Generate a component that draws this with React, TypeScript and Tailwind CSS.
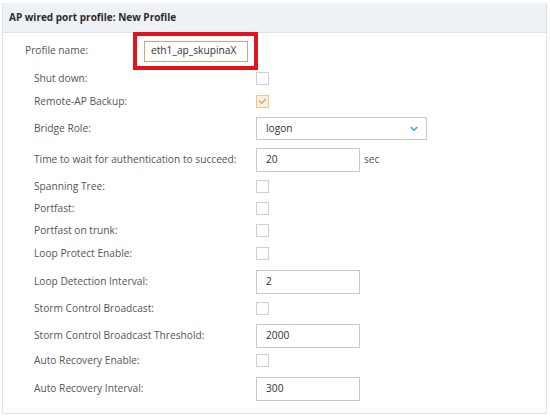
import React from "react";

const FONT = { fontFamily: '"Open Sans", "Liberation Sans", sans-serif' };

const Checkbox = ({ checked = false }: { checked?: boolean }) =>
  checked ? (
    <span className="flex h-[13px] w-[13px] items-center justify-center border border-[#f2c48c] bg-[#fdf1e2]">
      <svg className="h-[9px] w-[9px]" viewBox="0 0 10 10" fill="none">
        <path d="M1.5 4.5 L4.2 7 L8.5 2.5" stroke="#e3a256" strokeWidth={1.4} strokeLinecap="round" strokeLinejoin="round" />
      </svg>
    </span>
  ) : (
    <span className="block h-[13px] w-[13px] border border-[#cfcfcf] bg-white" />
  );

const TextBox = ({ value }: { value: string }) => (
  <div className="flex h-[24px] w-[104px] items-center border border-[#c9c9c9] bg-white pl-[9px] text-[10.2px] text-[#333]">
    {value}
  </div>
);

type Row = { label: string; mt: string; control: React.ReactNode; h: string };

const rows: Row[] = [
  { label: "Shut down:", mt: "mt-[2px]", h: "h-[13px]", control: <Checkbox /> },
  { label: "Remote-AP Backup:", mt: "mt-[10px]", h: "h-[13px]", control: <Checkbox checked /> },
  {
    label: "Bridge Role:",
    mt: "mt-[9px]",
    h: "h-[23px]",
    control: (
      <div className="flex h-[23px] w-[171px] items-center justify-between border border-[#c9c9c9] bg-white pl-[9px] pr-[8px] text-[10.2px] text-[#333]">
        <span>logon</span>
        <svg className="h-[8px] w-[8px]" viewBox="0 0 10 10" fill="none">
          <path d="M1.5 3 L5 6.5 L8.5 3" stroke="#3b9fcf" strokeWidth={1.8} strokeLinecap="round" strokeLinejoin="round" />
        </svg>
      </div>
    ),
  },
  {
    label: "Time to wait for authentication to succeed:",
    mt: "mt-[8px]",
    h: "h-[24px]",
    control: (
      <div className="flex items-center gap-[4px]">
        <TextBox value="20" />
        <span className="text-[10.2px] text-[#555]">sec</span>
      </div>
    ),
  },
  { label: "Spanning Tree:", mt: "mt-[8px]", h: "h-[13px]", control: <Checkbox /> },
  { label: "Portfast:", mt: "mt-[9px]", h: "h-[13px]", control: <Checkbox /> },
  { label: "Portfast on trunk:", mt: "mt-[9px]", h: "h-[13px]", control: <Checkbox /> },
  { label: "Loop Protect Enable:", mt: "mt-[10px]", h: "h-[13px]", control: <Checkbox /> },
  { label: "Loop Detection Interval:", mt: "mt-[10px]", h: "h-[24px]", control: <TextBox value="2" /> },
  { label: "Storm Control Broadcast:", mt: "mt-[8px]", h: "h-[13px]", control: <Checkbox /> },
  { label: "Storm Control Broadcast Threshold:", mt: "mt-[9px]", h: "h-[24px]", control: <TextBox value="2000" /> },
  { label: "Auto Recovery Enable:", mt: "mt-[6px]", h: "h-[13px]", control: <Checkbox /> },
  { label: "Auto Recovery Interval:", mt: "mt-[10px]", h: "h-[24px]", control: <TextBox value="300" /> },
];

export default function App() {
  return (
    <div className="h-[418px] w-[550px] bg-white pl-[2px] pr-[3px] pt-[3px]" style={FONT}>
      <div className="border border-t-0 border-[#dfe3e8] pb-[12px]">
        {/* Header */}
        <div className="flex h-[30px] items-center border-b border-[#dde2e8] bg-[#eef1f6] pl-[6px] text-[10px] font-bold text-[#2b2b2b]">
          AP wired port profile: New Profile
        </div>

        {/* Profile name */}
        <div className="-mt-px flex h-[38px] items-center">
          <span className="w-[130px] shrink-0 pl-[22px] text-[10.2px] text-[#555]">Profile name:</span>
          <div className="flex h-[38px] w-[125px] items-center border-[4px] border-[#e3131c] bg-white pl-[7px]">
            <div className="flex h-[21px] w-[104px] items-center border border-[#c8a979] pl-[6px] text-[10.2px] text-[#333]">
              eth1_ap_skupinaX
            </div>
          </div>
        </div>

        {rows.map((r) => (
          <div key={r.label} className={`flex items-center ${r.mt} ${r.h}`}>
            <span className="w-[253px] shrink-0 pl-[31px] text-[10.2px] text-[#555] whitespace-nowrap">{r.label}</span>
            {r.control}
          </div>
        ))}
      </div>
    </div>
  );
}
